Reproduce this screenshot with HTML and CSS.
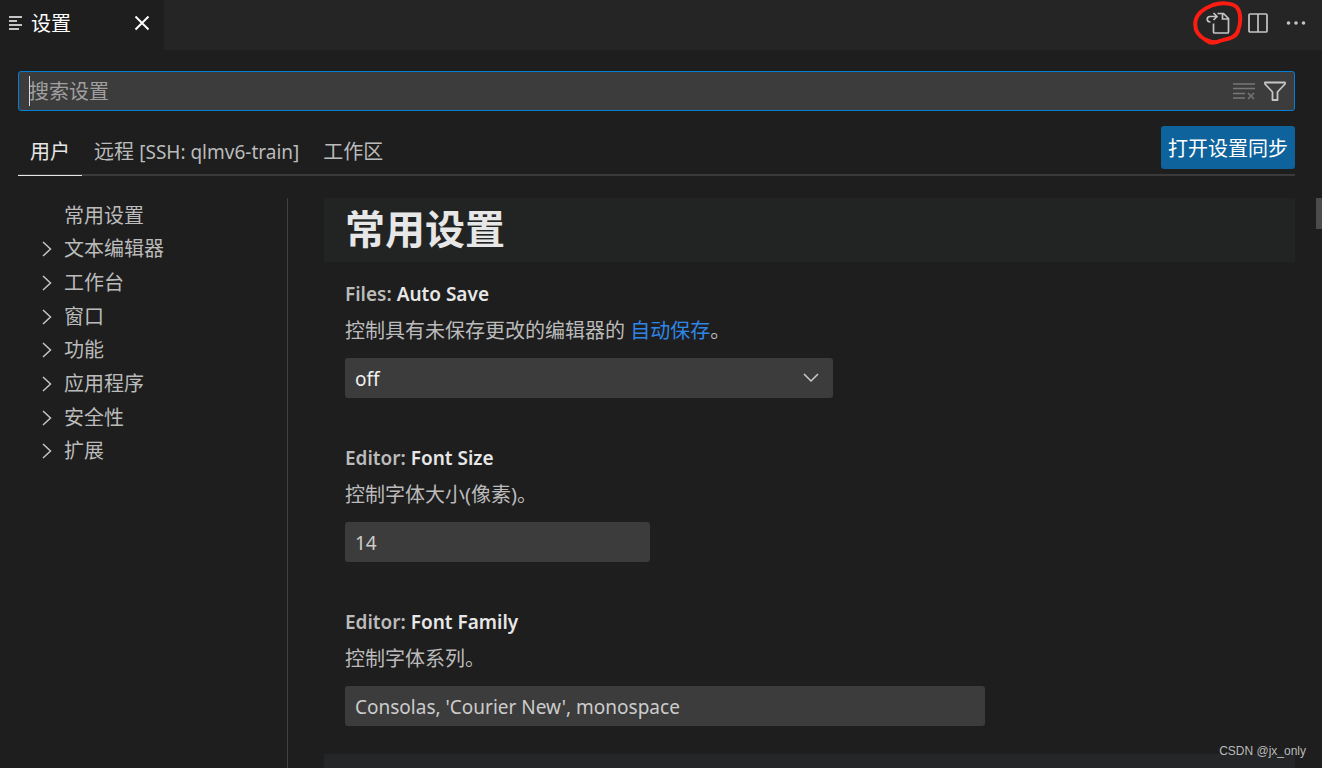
FILE: index.html
```html
<!DOCTYPE html>
<html lang="zh-CN">
<head>
<meta charset="utf-8">
<title>设置</title>
<link rel="stylesheet" href="styles.css">
</head>
<body>
<header class="titlebar">
  <div class="tab">
    <svg class="tab-icon" width="14" height="16" viewBox="0 0 14 16" fill="none" stroke="#c5c5c5" stroke-width="2"><path d="M0 1h13M0 5h8M0 9h13M0 13h10"/></svg>
    <span class="tab-name">设置</span>
    <button class="icon-button tab-close" aria-label="关闭"><svg width="16" height="16" viewBox="0 0 16 16" fill="none" stroke="#fff" stroke-width="2"><path d="M1.500 .5l13 13M14.500 .5l-13 13"/></svg></button>
  </div>
  <div class="actions">
    <button class="icon-button marked" aria-label="打开设置(json)">
      <svg width="24" height="24" viewBox="0 0 24 24" fill="none" stroke="#c5c5c5" stroke-width="1.700"><path d="M7.500 12.500V21q0 1 1 1h13q1 0 1-1V7.500l-5-5h-6M16.500 2.500V8h6"/><path d="M4.500 11C0 11 .5 5.500 4 5.500h6.500M7.500 2l3.500 3.500-3.500 3.500"/></svg>
      <svg class="ring" width="52" height="46" viewBox="0 0 52 46" fill="none" stroke="#fb1d12" stroke-width="4" stroke-linecap="round" stroke-linejoin="round"><path d="M21 4C13 7 5 12 3.500 20C2 29 6 35 14 39L21 41.500L25 41C30 38 43 39 46 30C49 22 49 13 46 8C43 2 30 1 21 4"/><path d="M14 39l4 2.500 7-.5"/></svg>
    </button>
    <button class="icon-button" aria-label="拆分编辑器"><svg width="20" height="20" viewBox="0 0 20 20" fill="none" stroke="#c5c5c5" stroke-width="1.700"><rect x="1" y="1" width="18" height="18" rx="1"/><path d="M10 1v18"/></svg></button>
    <button class="icon-button" aria-label="更多操作"><svg width="20" height="20" viewBox="0 0 20 20" fill="#c5c5c5"><circle cx="2.500" cy="10" r="1.800"/><circle cx="10" cy="10" r="1.800"/><circle cx="17.500" cy="10" r="1.800"/></svg></button>
  </div>
</header>

<main class="editor">
  <div class="search">
    <span class="caret"></span>
    <input class="search-input" type="text" placeholder="搜索设置" aria-label="搜索设置">
    <button class="icon-button" aria-label="清除搜索"><svg width="22" height="18" viewBox="0 0 22 18" fill="none" stroke="#777" stroke-width="1.500"><path d="M0 2h22M0 6.500h22M0 11.500h12M0 16h12M15 11l6 6M21 11l-6 6"/></svg></button>
    <button class="icon-button" aria-label="筛选"><svg width="22" height="20" viewBox="0 0 22 20" fill="none" stroke="#c5c5c5" stroke-width="1.800" stroke-linejoin="round"><path d="M1 1.500h20v1.500l-7.500 8V19h-5v-8L1 3z"/></svg></button>
  </div>

  <div class="scopes">
    <nav class="scope-tabs">
      <button class="scope active">用户</button>
      <button class="scope">远程 <span class="latin">[SSH: qlmv6-train]</span></button>
      <button class="scope">工作区</button>
    </nav>
    <button class="sync">打开设置同步</button>
  </div>

  <div class="body">
    <nav class="toc">
      <ul class="toc-list">
        <li class="toc-item leaf">常用设置</li>
        <li class="toc-item"><svg class="chevron" viewBox="0 0 10 16"><path d="M1 1l7.500 7L1 15"/></svg>文本编辑器</li>
        <li class="toc-item"><svg class="chevron" viewBox="0 0 10 16"><path d="M1 1l7.500 7L1 15"/></svg>工作台</li>
        <li class="toc-item"><svg class="chevron" viewBox="0 0 10 16"><path d="M1 1l7.500 7L1 15"/></svg>窗口</li>
        <li class="toc-item"><svg class="chevron" viewBox="0 0 10 16"><path d="M1 1l7.500 7L1 15"/></svg>功能</li>
        <li class="toc-item"><svg class="chevron" viewBox="0 0 10 16"><path d="M1 1l7.500 7L1 15"/></svg>应用程序</li>
        <li class="toc-item"><svg class="chevron" viewBox="0 0 10 16"><path d="M1 1l7.500 7L1 15"/></svg>安全性</li>
        <li class="toc-item"><svg class="chevron" viewBox="0 0 10 16"><path d="M1 1l7.500 7L1 15"/></svg>扩展</li>
      </ul>
    </nav>
    <div class="settings">
      <h1 class="group">常用设置</h1>
      <section class="setting">
        <label class="name" for="auto-save">Files: <b class="key">Auto Save</b></label>
        <p class="desc">控制具有未保存更改的编辑器的 <a class="link" href="#auto-save">自动保存</a>。</p>
        <div class="select-wrap">
          <select class="field select" id="auto-save"><option>off</option></select>
          <svg class="select-arrow" width="16" height="10" viewBox="0 0 16 10" fill="none" stroke="#ccc" stroke-width="1.500"><path d="M1 1l7 7 7-7"/></svg>
        </div>
      </section>
      <section class="setting">
        <label class="name" for="font-size">Editor: <b class="key">Font Size</b></label>
        <p class="desc">控制字体大小(像素)。</p>
        <input class="field number" id="font-size" type="text" value="14">
      </section>
      <section class="setting">
        <label class="name" for="font-family">Editor: <b class="key">Font Family</b></label>
        <p class="desc">控制字体系列。</p>
        <input class="field wide" id="font-family" type="text" value="Consolas, 'Courier New', monospace">
      </section>
      <div class="next-setting"></div>
    </div>
  </div>
</main>
<div class="scroll-thumb"></div>
<div class="watermark">CSDN @jx_only</div>
</body>
</html>
```
FILE: styles.css
```css
* { box-sizing: border-box; }

body {
  margin: 0;
  height: 100vh;
  display: flex;
  flex-direction: column;
  overflow: hidden;
  position: relative;
  background: #1e1e1e;
  color: #bbb;
  font: 20px/28px "Noto Sans", "Noto Sans CJK SC", sans-serif;
}

button, input, select { font: inherit; color: inherit; }
button { border: 0; padding: 0; background: none; white-space: nowrap; }
svg { display: block; }

.icon-button { display: flex; align-items: center; position: relative; }

.titlebar {
  display: flex;
  justify-content: space-between;
  height: 50px;
  background: #252526;
}

.tab {
  display: flex;
  align-items: center;
  width: 164px;
  height: 50px;
  padding: 0 14px 2px 9px;
  background: #1e1e1e;
  color: #fff;
}
.tab-name { margin-left: 8px; }
.tab-close { margin-left: auto; }

.actions {
  display: flex;
  align-items: center;
  gap: 18px;
  padding: 0 16px 5px 0;
}
.ring { position: absolute; left: -14px; top: -10px; }

.editor {
  flex: 1;
  min-height: 0;
  display: flex;
  flex-direction: column;
  padding: 21px 27px 0 18px;
}

.search {
  display: flex;
  align-items: center;
  gap: 9px;
  height: 40px;
  flex: none;
  padding: 0 8px 0 10px;
  border: 1px solid #007fd4;
  border-radius: 3px;
  background: #3c3c3c;
  position: relative;
}
.caret {
  position: absolute;
  left: 10px;
  top: 4px;
  width: 1px;
  height: 30px;
  background: #ddd;
}
.search-input {
  flex: 1;
  min-width: 0;
  height: 36px;
  padding: 0;
  border: 0;
  outline: 0;
  background: none;
}
.search-input::placeholder { color: #a0a0a0; opacity: 1; }

.scopes {
  display: flex;
  justify-content: space-between;
  align-items: flex-start;
  flex: none;
  margin-top: 15px;
  height: 50px;
  border-bottom: 2px solid #3a3a3a;
}
.scope-tabs { display: flex; }
.scope { height: 50px; padding: 2px 12px 0; border-bottom: 1px solid transparent; }
.scope.active { color: #e7e7e7; border-color: #e7e7e7; }
.latin { font-size: 19px; }
.sync {
  height: 43px;
  padding: 2px 7px 0;
  border-radius: 3px;
  background: #0e639c;
  color: #fff;
}

.body {
  flex: 1;
  min-height: 0;
  display: flex;
  margin-top: 22px;
}

.toc {
  width: 270px;
  flex: none;
  border-right: 1px solid #414141;
}
.toc-list {
  display: grid;
  grid-template-rows: repeat(8, 1fr);
  height: 270px;
  margin: 0;
  padding: 1px 0 0 24px;
  list-style: none;
}
.toc-item { display: flex; align-items: center; gap: 12px; }
.toc-item.leaf { padding-left: 22px; }
.chevron {
  width: 10px;
  height: 16px;
  fill: none;
  stroke: #c5c5c5;
  stroke-width: 1.5;
}

.settings {
  flex: 1;
  min-width: 0;
  display: flex;
  flex-direction: column;
  margin-left: 36px;
}
.group {
  flex: none;
  height: 64px;
  margin: 0;
  padding-left: 21px;
  background: #212423;
  color: #e7e7e7;
  font-size: 40px;
  line-height: 62px;
}
.setting {
  flex: none;
  display: flex;
  flex-direction: column;
  align-items: flex-start;
  padding: 18px 21px 28px;
}
.name { font-size: 19px; font-weight: 600; }
.key { font-weight: 600; color: #e7e7e7; }
.desc { margin: 9px 0 13px; }
.link { color: #2f86e6; text-decoration: none; }

.field {
  height: 40px;
  padding: 1px 10px 0;
  border: 0;
  border-radius: 3px;
  background: #3c3c3c;
  color: #ccc;
  font-size: 19px;
}
.select-wrap { position: relative; width: 488px; max-width: 100%; }
.select {
  display: block;
  width: 100%;
  appearance: none;
  color: #f0f0f0;
}
.select-arrow {
  position: absolute;
  right: 14px;
  top: 15px;
  pointer-events: none;
}
.number { width: 305px; }
.wide { width: 640px; max-width: 100%; }

.next-setting { flex: 1; background: #252627; }

.scroll-thumb {
  position: absolute;
  right: 0;
  top: 198px;
  width: 6px;
  height: 31px;
  background: #4b4b4b;
}
.watermark {
  position: absolute;
  right: 16px;
  bottom: 8px;
  color: #bbb;
  font: 12px/18px "Liberation Sans", Arial, sans-serif;
}
```
